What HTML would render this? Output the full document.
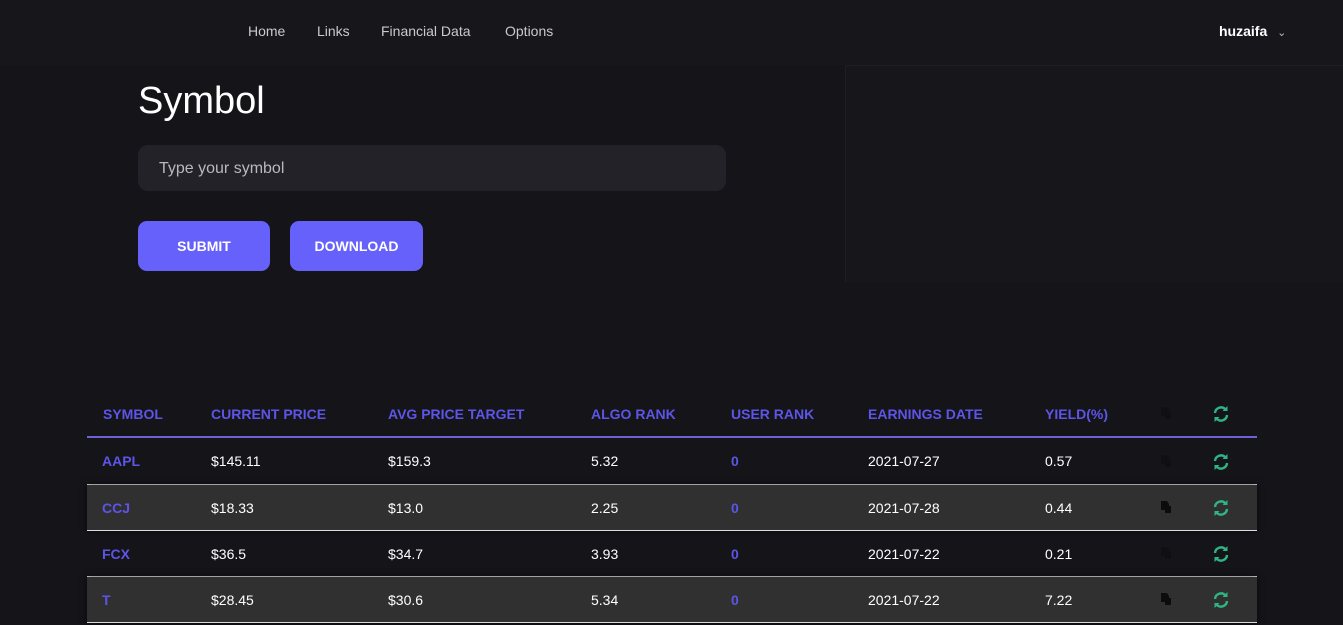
<!DOCTYPE html>
<html><head><style>
body{margin:0;width:1343px;height:625px;overflow:hidden;background:#141419;font-family:"Liberation Sans",sans-serif;position:relative;color:#fff}
.a{position:absolute}
.nav{font-size:14px;color:#c9c9cf;top:23px}
.th{top:406px;font-size:14px;font-weight:bold;color:#5d55e8}
.row{position:absolute;left:87px;width:1170px;height:46px}
.row span{position:absolute;top:15px;font-size:14px;color:#fff}
.row .s{color:#5d55e8;font-weight:bold;font-size:14px}
.gray{background:#303030;box-shadow:0 0 6px rgba(0,0,0,.6)}
.btn{background:#6661fb;border-radius:9px;height:50px;top:221px;font-size:14px;font-weight:bold;text-align:center;line-height:51px}
</style></head><body>
<div class="a" style="left:0;top:0;width:1343px;height:65px;background:#16161b"></div>
<div class="a" style="left:845px;top:65px;width:498px;height:216px;border-left:1px solid #1e1e24;border-top:1px solid #1e1e24;background:#16161b"></div>
<div class="a nav" style="left:248px">Home</div>
<div class="a nav" style="left:317px">Links</div>
<div class="a nav" style="left:381px">Financial Data</div>
<div class="a nav" style="left:505px">Options</div>
<div class="a" style="left:1219px;top:23px;font-size:14px;font-weight:bold">huzaifa <span style="font-weight:normal;font-size:11px;margin-left:6px;color:#bbb">&#8964;</span></div>
<div class="a" style="left:138px;top:80px;font-size:38px">Symbol</div>
<div class="a" style="left:138px;top:145px;width:588px;height:46px;background:#222228;border-radius:10px"></div>
<div class="a" style="left:159px;top:160px;font-size:16px;color:#b8b8be">Type your symbol</div>
<div class="a btn" style="left:138px;width:132px">SUBMIT</div>
<div class="a btn" style="left:290px;width:133px">DOWNLOAD</div>

<div class="a th" style="left:103px">SYMBOL</div>
<div class="a th" style="left:211px">CURRENT PRICE</div>
<div class="a th" style="left:388px">AVG PRICE TARGET</div>
<div class="a th" style="left:591px">ALGO RANK</div>
<div class="a th" style="left:731px">USER RANK</div>
<div class="a th" style="left:868px">EARNINGS DATE</div>
<div class="a th" style="left:1045px">YIELD(%)</div>
<div class="a" style="left:87px;top:436px;width:1170px;height:2px;background:#6c63d9"></div>

<svg width="0" height="0" style="position:absolute"><defs>
<symbol id="r" viewBox="0 0 20 20"><path d="M4 9a6 6 0 0 1 10.5-3.5M16 11a6 6 0 0 1-10.5 3.5" fill="none" stroke="#2fb585" stroke-width="2.4"/><path d="M16.5 2v5h-5z M3.5 18v-5h5z" fill="#2fb585"/></symbol>
<symbol id="d" viewBox="0 0 12 14"><path d="M1 1h6l2 3v2h2v7H5V10H1z" fill="#0c0c0c"/></symbol>
</defs></svg>
<div class="a" style="left:1160px;top:406px;width:12px;height:14px"><svg width="12" height="14"><use href="#d" opacity=".4"/></svg></div>
<div class="a" style="left:1211px;top:404px"><svg width="20" height="20"><use href="#r"/></svg></div>

<div class="row" style="top:438px"><span class="s" style="left:15px">AAPL</span><span style="left:124px">$145.11</span><span style="left:301px">$159.3</span><span style="left:504px">5.32</span><span class="s" style="left:644px">0</span><span style="left:781px">2021-07-27</span><span style="left:958px">0.57</span></div>
<div class="a" style="left:87px;top:484px;width:1170px;height:1px;background:#ddd"></div>
<div class="row gray" style="top:485px"><span class="s" style="left:15px">CCJ</span><span style="left:124px">$18.33</span><span style="left:301px">$13.0</span><span style="left:504px">2.25</span><span class="s" style="left:644px">0</span><span style="left:781px">2021-07-28</span><span style="left:958px">0.44</span></div>
<div class="a" style="left:87px;top:530px;width:1170px;height:1px;background:#ddd"></div>
<div class="row" style="top:531px"><span class="s" style="left:15px">FCX</span><span style="left:124px">$36.5</span><span style="left:301px">$34.7</span><span style="left:504px">3.93</span><span class="s" style="left:644px">0</span><span style="left:781px">2021-07-22</span><span style="left:958px">0.21</span></div>
<div class="a" style="left:87px;top:576px;width:1170px;height:1px;background:#ddd"></div>
<div class="row gray" style="top:577px"><span class="s" style="left:15px">T</span><span style="left:124px">$28.45</span><span style="left:301px">$30.6</span><span style="left:504px">5.34</span><span class="s" style="left:644px">0</span><span style="left:781px">2021-07-22</span><span style="left:958px">7.22</span></div>
<div class="a" style="left:87px;top:622px;width:1170px;height:1px;background:#ddd"></div>

<div class="a" style="left:1160px;top:454px"><svg width="12" height="14"><use href="#d" opacity=".4"/></svg></div>
<div class="a" style="left:1160px;top:500px"><svg width="12" height="14"><use href="#d"/></svg></div>
<div class="a" style="left:1160px;top:546px"><svg width="12" height="14"><use href="#d" opacity=".4"/></svg></div>
<div class="a" style="left:1160px;top:592px"><svg width="12" height="14"><use href="#d"/></svg></div>
<div class="a" style="left:1211px;top:452px"><svg width="20" height="20"><use href="#r"/></svg></div>
<div class="a" style="left:1211px;top:498px"><svg width="20" height="20"><use href="#r"/></svg></div>
<div class="a" style="left:1211px;top:544px"><svg width="20" height="20"><use href="#r"/></svg></div>
<div class="a" style="left:1211px;top:590px"><svg width="20" height="20"><use href="#r"/></svg></div>
</body></html>
